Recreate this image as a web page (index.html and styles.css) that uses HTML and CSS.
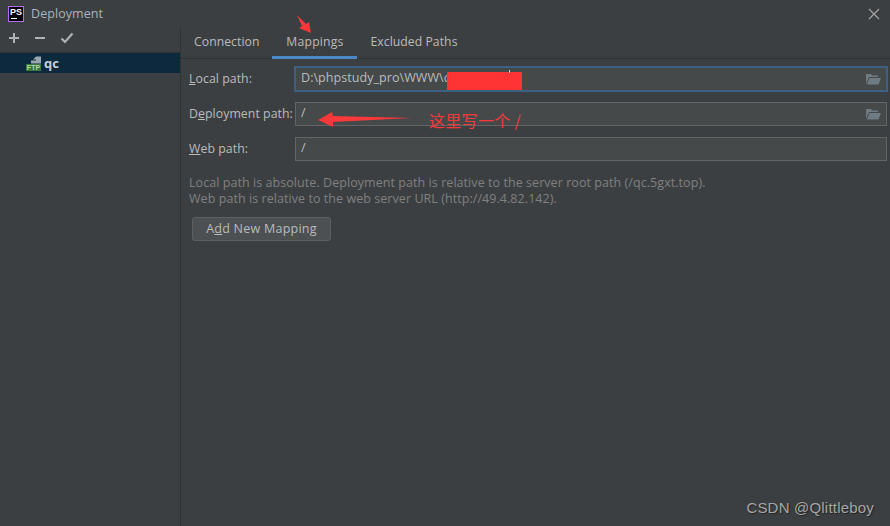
FILE: index.html
```html
<!DOCTYPE html>
<html lang="en">
<head>
    <meta charset="UTF-8">
    <meta name="viewport" content="width=device-width, initial-scale=1.0">
    <title>Deployment</title>
    <link rel="stylesheet" href="styles.css">
</head>
<body>
    <div class="window">
        <header class="titlebar">
            <div class="app-logo"><span class="app-logo-text">PS</span><span class="app-logo-bar"></span></div>
            <div class="title">Deployment</div>
            <svg class="close" width="12" height="12" viewBox="0 0 12 12"><path d="M1 1l10 10M11 1L1 11" stroke="#a8a8a8" stroke-width="1.1" fill="none"/></svg>
        </header>
        <div class="content">
            <aside class="sidebar">
                <div class="toolbar">
                    <svg width="12" height="12" viewBox="0 0 12 12"><path d="M6 1v10M1 6h10" stroke="#afb1b3" stroke-width="2" fill="none"/></svg>
                    <svg width="12" height="12" viewBox="0 0 12 12"><path d="M1 6h10" stroke="#afb1b3" stroke-width="2" fill="none"/></svg>
                    <svg width="14" height="12" viewBox="0 0 14 12"><path d="M1.500 6.500l3.500 3.500 7.500-8.500" stroke="#afb1b3" stroke-width="2.200" fill="none"/></svg>
                </div>
                <div class="server-row">
                    <div class="ftp-icon">
                        <svg width="10" height="8" viewBox="0 0 10 8"><path d="M2 3.500L5 .5v3zM0 7.500v-3h5V.5h5v7z" fill="#9aa7b0"/></svg>
                        <span class="ftp-badge">FTP</span>
                    </div>
                    <span class="server-name">qc</span>
                </div>
            </aside>
            <main class="main">
                <nav class="tabs">
                    <div class="tab">Connection</div>
                    <div class="tab active">Mappings</div>
                    <div class="tab">Excluded Paths</div>
                </nav>
                <div class="form">
                    <div class="field-row">
                        <label class="field-label"><u>L</u>ocal path:</label>
                        <div class="field focused">
                            <span class="field-value">D:\phpstudy_pro\WWW\c</span>
                            <svg class="folder" width="15" height="12" viewBox="0 0 15 12"><path d="M0 1h5l1 1.500h6V4H3L0 11zM3.500 5H15l-2.500 6.500H.8z" fill="#6e7b82"/></svg>
                        </div>
                    </div>
                    <div class="field-row">
                        <label class="field-label">D<u>e</u>ployment path:</label>
                        <div class="field">
                            <span class="field-value">/</span>
                            <svg class="folder" width="15" height="12" viewBox="0 0 15 12"><path d="M0 1h5l1 1.500h6V4H3L0 11zM3.500 5H15l-2.500 6.500H.8z" fill="#6e7b82"/></svg>
                        </div>
                    </div>
                    <div class="field-row">
                        <label class="field-label"><u>W</u>eb path:</label>
                        <div class="field">
                            <span class="field-value">/</span>
                        </div>
                    </div>
                </div>
                <p class="hint">Local path is absolute. Deployment path is relative to the server root path (/qc.5gxt.top).<br>Web path is relative to the web server URL (http://49.4.82.142).</p>
                <button class="add-btn">A<u>d</u>d New Mapping</button>
            </main>
        </div>

        <!-- red marks drawn on top of the screenshot -->
        <div class="redact"></div>
        <div class="caret"></div>
        <svg class="marks" width="890" height="526" viewBox="0 0 890 526">
            <path d="M297 15l9 9 3-2 2 11-12-5 3-2z" fill="#f8383a"/>
            <path d="M318 120l14-8 1 4 79 2-79 4v5z" fill="#f8383a"/>
        </svg>
        <div class="note">这里写一个 /</div>
        <div class="watermark">CSDN @Qlittleboy</div>
    </div>
</body>
</html>
```
FILE: styles.css
```css
* {
    margin: 0;
    padding: 0;
    box-sizing: border-box;
}

body {
    background: #3c3f41;
    font-family: 'Open Sans', 'Noto Sans', sans-serif;
    font-size: 12.5px;
    letter-spacing: 0.06px;
    color: #bbbbbb;
    overflow: hidden;
}

.window {
    width: 890px;
    height: 526px;
    position: relative;
    display: flex;
    flex-direction: column;
}

.titlebar {
    height: 27px;
    display: flex;
    align-items: center;
    padding: 0 10px 0 8px;
}

.app-logo {
    width: 16px;
    height: 16px;
    background: #000;
    border: 1px solid #b86bff;
    color: #fff;
    position: relative;
    margin-right: 7px;
}

.app-logo-text {
    display: block;
    font-family: 'Liberation Sans', sans-serif;
    font-weight: 700;
    font-size: 9px;
    line-height: 10px;
    padding-left: 1px;
}

.app-logo-bar {
    position: absolute;
    left: 2px;
    bottom: 2px;
    width: 6px;
    height: 1px;
    background: #fff;
}

.title {
    flex: 1;
    color: #a9b3ba;
}

.content {
    flex: 1;
    display: flex;
}

.sidebar {
    width: 181px;
    border-right: 1px solid #323232;
}

.toolbar {
    height: 26px;
    display: flex;
    align-items: center;
    gap: 14px;
    padding: 0 0 3px 8px;
    border-bottom: 1px solid #323232;
}

.server-row {
    height: 20px;
    background: #0d293e;
    display: flex;
    align-items: center;
    padding-left: 26px;
    gap: 3px;
}

.ftp-icon {
    width: 15px;
    display: flex;
    flex-direction: column;
    align-items: flex-end;
}

.ftp-badge {
    width: 15px;
    height: 7px;
    background: #38763a;
    color: #b5d8b0;
    font-size: 7px;
    font-weight: 700;
    line-height: 7px;
    text-align: center;
    font-family: 'Liberation Sans', sans-serif;
}

.server-name {
    font-weight: 700;
    color: #c3d0dc;
    font-size: 13px;
    line-height: 16px;
}

.main {
    flex: 1;
    padding-right: 3px;
}

.tabs {
    height: 32px;
    margin-right: -3px;
    display: flex;
    border-bottom: 1px solid #323232;
}

.tab {
    padding: 0 13px;
    font-size: 12.2px;
    line-height: 30px;
    height: 32px;
}

.active {
    width: 85px;
    padding: 0;
    text-align: center;
    letter-spacing: 0.2px;
    border-bottom: 3px solid #4a88c7;
}

.form {
    padding-top: 8px;
    display: flex;
    flex-direction: column;
    gap: 11px;
}

.field-row {
    display: flex;
    align-items: center;
    padding-left: 8px;
}

.field-label {
    width: 106px;
    white-space: nowrap;
    font-size: 12.3px;
    line-height: 16px;
}

.field {
    flex: 1;
    height: 24px;
    background: #45494a;
    border: 1px solid #646464;
    display: flex;
    align-items: center;
    justify-content: space-between;
    padding: 0 5px;
}

.focused {
    outline: 2px solid #3d6185;
    outline-offset: -1px;
}

.field-value {
    line-height: 16px;
    margin-top: -2px;
}

.hint {
    color: #808080;
    line-height: 16px;
    margin: 14px 0 0 8px;
}

.add-btn {
    display: block;
    margin: 10px 0 0 11px;
    padding-bottom: 2px;
    width: 139px;
    height: 24px;
    background: #4c5052;
    border: 1px solid #5e6060;
    border-radius: 3px;
    color: #bbbbbb;
    font: inherit;
    letter-spacing: 0.25px;
}

.redact {
    position: absolute;
    left: 447px;
    top: 72px;
    width: 75px;
    height: 18px;
    background: #fe3333;
}

.caret {
    position: absolute;
    left: 509px;
    top: 70px;
    width: 1px;
    height: 3px;
    background: #ccc;
}

.marks {
    position: absolute;
    left: 0;
    top: 0;
}

.note {
    position: absolute;
    left: 429px;
    top: 110px;
    color: #f8383a;
    font-family: 'Noto Sans CJK SC', sans-serif;
    font-size: 16px;
    letter-spacing: 0.3px;
    line-height: 20px;
}

.watermark {
    position: absolute;
    right: 16px;
    bottom: 10px;
    font-family: 'Liberation Sans', sans-serif;
    font-size: 15px;
    letter-spacing: 0.2px;
    color: #a5a5a5;
    text-shadow: 1px 1px 1px #222;
}
```
